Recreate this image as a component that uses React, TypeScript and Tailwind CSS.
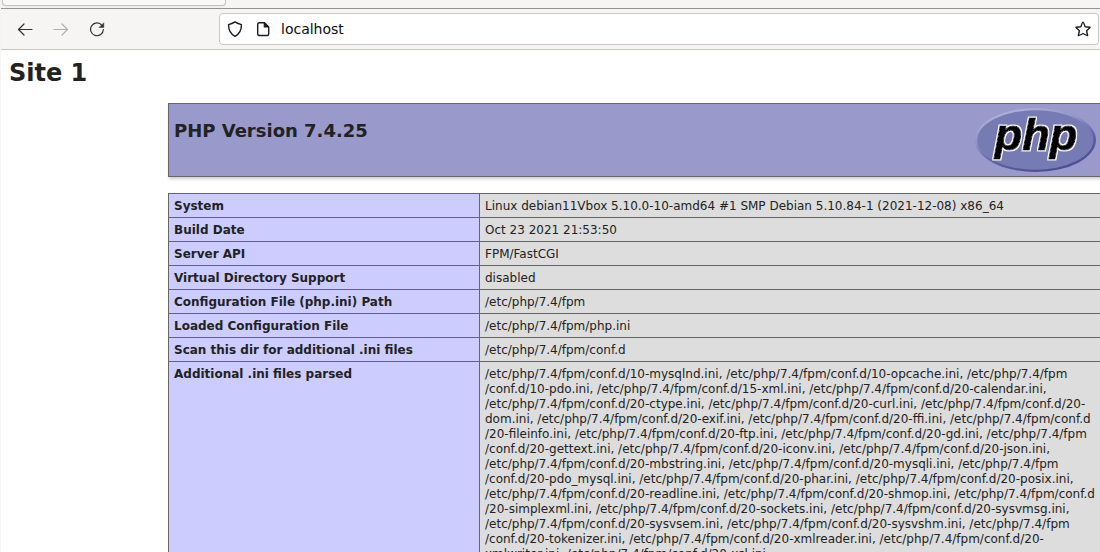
import React from "react";

const rows: [string, string][] = [
  ["System", "Linux debian11Vbox 5.10.0-10-amd64 #1 SMP Debian 5.10.84-1 (2021-12-08) x86_64"],
  ["Build Date", "Oct 23 2021 21:53:50"],
  ["Server API", "FPM/FastCGI"],
  ["Virtual Directory Support", "disabled"],
  ["Configuration File (php.ini) Path", "/etc/php/7.4/fpm"],
  ["Loaded Configuration File", "/etc/php/7.4/fpm/php.ini"],
  ["Scan this dir for additional .ini files", "/etc/php/7.4/fpm/conf.d"],
];

const parsedFiles = [
  "/etc/php/7.4/fpm/conf.d/10-mysqlnd.ini, /etc/php/7.4/fpm/conf.d/10-opcache.ini, /etc/php/7.4/fpm",
  "/conf.d/10-pdo.ini, /etc/php/7.4/fpm/conf.d/15-xml.ini, /etc/php/7.4/fpm/conf.d/20-calendar.ini,",
  "/etc/php/7.4/fpm/conf.d/20-ctype.ini, /etc/php/7.4/fpm/conf.d/20-curl.ini, /etc/php/7.4/fpm/conf.d/20-",
  "dom.ini, /etc/php/7.4/fpm/conf.d/20-exif.ini, /etc/php/7.4/fpm/conf.d/20-ffi.ini, /etc/php/7.4/fpm/conf.d",
  "/20-fileinfo.ini, /etc/php/7.4/fpm/conf.d/20-ftp.ini, /etc/php/7.4/fpm/conf.d/20-gd.ini, /etc/php/7.4/fpm",
  "/conf.d/20-gettext.ini, /etc/php/7.4/fpm/conf.d/20-iconv.ini, /etc/php/7.4/fpm/conf.d/20-json.ini,",
  "/etc/php/7.4/fpm/conf.d/20-mbstring.ini, /etc/php/7.4/fpm/conf.d/20-mysqli.ini, /etc/php/7.4/fpm",
  "/conf.d/20-pdo_mysql.ini, /etc/php/7.4/fpm/conf.d/20-phar.ini, /etc/php/7.4/fpm/conf.d/20-posix.ini,",
  "/etc/php/7.4/fpm/conf.d/20-readline.ini, /etc/php/7.4/fpm/conf.d/20-shmop.ini, /etc/php/7.4/fpm/conf.d",
  "/20-simplexml.ini, /etc/php/7.4/fpm/conf.d/20-sockets.ini, /etc/php/7.4/fpm/conf.d/20-sysvmsg.ini,",
  "/etc/php/7.4/fpm/conf.d/20-sysvsem.ini, /etc/php/7.4/fpm/conf.d/20-sysvshm.ini, /etc/php/7.4/fpm",
  "/conf.d/20-tokenizer.ini, /etc/php/7.4/fpm/conf.d/20-xmlreader.ini, /etc/php/7.4/fpm/conf.d/20-",
  "xmlwriter.ini, /etc/php/7.4/fpm/conf.d/20-xsl.ini,",
];

function Icon({ children }: { children: React.ReactNode }) {
  return (
    <svg
      aria-hidden="true"
      className="size-4 shrink-0"
      viewBox="0 0 16 16"
      fill="none"
      stroke="currentColor"
      strokeWidth="1.2"
      strokeLinecap="round"
      strokeLinejoin="round"
    >
      {children}
    </svg>
  );
}

function PhpLogo() {
  return (
    <svg role="img" aria-label="PHP logo" className="h-16 w-[121px] shrink-0" viewBox="0 0 121 64">
      <defs>
        <linearGradient id="rim" x1="0.25" y1="0" x2="0.75" y2="1">
          <stop offset="0" stopColor="#b3b5dc" />
          <stop offset="0.35" stopColor="#8f92c6" />
          <stop offset="0.65" stopColor="#5c60a5" />
          <stop offset="1" stopColor="#484b8c" />
        </linearGradient>
        <filter id="halo" x="-10%" y="-10%" width="120%" height="120%">
          <feMorphology in="SourceAlpha" operator="dilate" radius="1" result="wide" />
          <feFlood floodColor="#fff" />
          <feComposite in2="wide" operator="in" result="edge" />
          <feMerge>
            <feMergeNode in="edge" />
            <feMergeNode in="SourceGraphic" />
          </feMerge>
        </filter>
      </defs>
      <ellipse cx="60.5" cy="32" rx="60.5" ry="32" fill="url(#rim)" />
      <ellipse cx="60.3" cy="32" rx="58" ry="29.800" fill="#777bb3" />
      <text
        x="61"
        y="42"
        textAnchor="middle"
        fontFamily="Liberation Sans, sans-serif"
        fontWeight="bold"
        fontStyle="italic"
        fontSize="45"
        fill="#000"
        stroke="#000"
        strokeWidth="1"
        filter="url(#halo)"
      >
        php
      </text>
    </svg>
  );
}

function Browser() {
  return (
    <header className="-ml-px bg-[#f6f5f4]">
      <div className="flex h-[9px] items-start border-b border-[#939393] pl-0.5">
        <div className="h-[6px] w-56 rounded-b border border-t-0 border-[#c4c3cb] bg-[#f8f8f7] shadow-xs" />
      </div>
      <nav className="flex h-[41px] items-center border-b border-[#cdc7c2] pr-px pl-[17px]">
        <div className="flex w-[202px] gap-5 text-[#2e3436]">
          <button type="button" aria-label="Back">
            <Icon><path d="M15 8.500H1.500M7 3 1.500 8.500 7 14" /></Icon>
          </button>
          <button type="button" aria-label="Forward" disabled className="text-[#b0b0ae]">
            <Icon><path d="M1 8.500h13.500M9 3l5.500 5.500L9 14" /></Icon>
          </button>
          <button type="button" aria-label="Reload">
            <Icon>
              <path d="M13 4.300A6.400 6.400 0 1 0 14.400 8.500" />
              <path d="M14.800 2v4.500h-4.500z" fill="currentColor" strokeWidth="0.5" />
            </Icon>
          </button>
        </div>
        <div className="flex h-8 min-w-0 flex-1 items-center rounded border border-[#cdc7c2] bg-white px-[7px] text-[#1c1c1f]">
          <Icon><path d="M8 .9C6.500 2 4 2.900 1.600 3.600 1.400 8.900 3.500 13 8 15.300c4.500-2.300 6.600-6.400 6.400-11.700C12 2.900 9.500 2 8 .9Z" strokeWidth="1.4" /></Icon>
          <span className="ml-3 flex">
            <Icon>
              <path d="M9.500 1.800H4.200a1.500 1.500 0 0 0-1.500 1.500v9.700a1.500 1.500 0 0 0 1.500 1.500h8a1.500 1.500 0 0 0 1.500-1.500V6Z" strokeWidth="1.4" />
              <path d="M9.300 2V6h4.200Z" fill="currentColor" />
            </Icon>
          </span>
          <input
            aria-label="Address"
            defaultValue="localhost"
            className="ml-2.5 min-w-0 flex-1 bg-transparent text-sm text-[#0c0c0d] outline-none"
          />
          <button type="button" aria-label="Bookmark this page">
            <Icon>
              <path d="M8 1.100Q8.500 1.100 10.100 5.700L15 6.200Q15.400 6.600 11.600 9.700L12.600 14.500Q12.200 15 8 12.500 3.800 15 3.400 14.500L4.400 9.700Q.6 6.600 1 6.200L5.900 5.700Q7.500 1.100 8 1.100Z" strokeWidth="1.4" />
            </Icon>
          </button>
        </div>
      </nav>
    </header>
  );
}

export default function App() {
  return (
    <div className="flex h-screen flex-col overflow-hidden border-l border-[#f3f3f3] bg-white font-['DejaVu_Sans',sans-serif] text-[#222]">
      <Browser />
      <main className="min-h-0 flex-1 overflow-hidden pt-[9px]">
        <h1 className="pl-2 text-2xl leading-7 font-bold">Site 1</h1>
        <div className="mt-4 -mr-0.5 ml-[167px] text-xs">
          <section className="flex h-[74px] items-start justify-between border border-[#666] bg-[#9999cc] px-[5px] py-1 shadow-[1px_2px_3px_#ccc]">
            <h2 className="mt-3 text-lg leading-[22px] font-bold">PHP Version 7.4.25</h2>
            <PhpLogo />
          </section>
          <table className="mt-4 w-full table-fixed border-collapse leading-[15px]">
            <tbody>
              {rows.map(([name, value]) => (
                <tr key={name}>
                  <th scope="row" className="w-[311px] border border-[#666] bg-[#ccccff] px-[5px] pt-[5px] pb-[3px] text-left font-bold">
                    {name}
                  </th>
                  <td className="border border-[#666] bg-[#dddddd] px-[5px] pt-[5px] pb-[3px]">{value}</td>
                </tr>
              ))}
              <tr>
                <th scope="row" className="border border-[#666] bg-[#ccccff] px-[5px] pt-[5px] pb-[3px] text-left align-top font-bold">
                  Additional .ini files parsed
                </th>
                <td className="border border-[#666] bg-[#dddddd] px-[5px] pt-[5px] pb-[3px] whitespace-nowrap">
                  {parsedFiles.map((line) => (
                    <div key={line}>{line}</div>
                  ))}
                </td>
              </tr>
            </tbody>
          </table>
        </div>
      </main>
    </div>
  );
}
